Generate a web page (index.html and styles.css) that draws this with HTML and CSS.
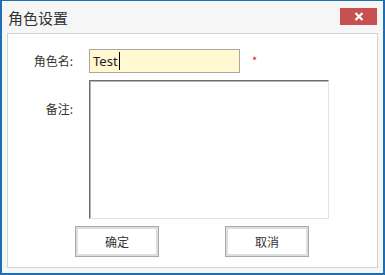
FILE: index.html
```html
<!DOCTYPE html>
<html lang="zh">
<head>
<meta charset="utf-8">
<title>角色设置</title>
<link rel="stylesheet" href="styles.css">
</head>
<body>
<div class="window">
  <div class="titlebar">
    <span class="title">角色设置</span>
    <button class="close" type="button" aria-label="关闭">
      <svg width="10" height="9" viewBox="0 0 10 9"><path d="M1.5 1 L8.5 8 M8.5 1 L1.5 8" stroke="#fff" stroke-width="2.2" fill="none"/></svg>
    </button>
  </div>
  <div class="panel">
    <div class="form">
      <label class="label">角色名:</label>
      <div class="field-row">
        <div class="input"><span class="value">Test</span><span class="caret"></span></div>
        <span class="required">*</span>
      </div>
      <label class="label label-top">备注:</label>
      <div class="textarea"></div>
    </div>
    <div class="actions">
      <button class="btn" type="button">确定</button>
      <button class="btn" type="button">取消</button>
    </div>
  </div>
</div>
</body>
</html>
```

FILE: styles.css
```css
* { box-sizing: border-box; }
html, body { margin: 0; padding: 0; }
body {
  font-family: "Noto Sans CJK SC", "Noto Sans", sans-serif;
  color: #333;
}
.window {
  width: 385px;
  height: 275px;
  background: #f6f6f6;
  border: 2px solid #1d6fb5;
  border-top-width: 1px;
  display: flex;
  flex-direction: column;
}
.titlebar {
  height: 32px;
  display: flex;
  align-items: flex-start;
  justify-content: space-between;
  padding: 0 6px 0 6px;
}
.title {
  font-size: 15px;
  line-height: 15px;
  margin-top: 9px;
  color: #333;
}
.close {
  width: 37px;
  height: 17px;
  margin-top: 7px;
  border: 0;
  padding: 0;
  background: #c75050;
  display: flex;
  align-items: center;
  justify-content: center;
}
.panel {
  margin: 0 5px 5px 5px;
  flex: 1;
  background: #fff;
  border: 1px solid #d2d2d2;
  padding: 15px 0 0 0;
}
.form {
  display: grid;
  grid-template-columns: 65px auto;
  column-gap: 16px;
  row-gap: 7px;
  align-items: center;
}
.label {
  font-size: 12px;
  line-height: 14px;
  text-align: right;
  color: #333;
}
.label-top {
  align-self: start;
  margin-top: 22px;
}
.field-row {
  display: flex;
  align-items: center;
}
.input {
  width: 151px;
  height: 24px;
  border: 1px solid #a8a89e;
  background: #fff8d1;
  display: flex;
  align-items: center;
  padding-left: 3px;
  font-family: "Noto Sans", "Open Sans", sans-serif;
  font-size: 13px;
  color: #222;
}
.caret {
  width: 1px;
  height: 18px;
  background: #000;
  margin-left: 1px;
}
.required {
  color: #d01010;
  font-size: 11px;
  line-height: 11px;
  margin-left: 12px;
  margin-top: -2px;
}
.textarea {
  width: 240px;
  height: 139px;
  border: 1px solid;
  border-color: #6e6e6e #e3e3e3 #e3e3e3 #6e6e6e;
  box-shadow: inset 1px 1px 0 #b4b4b4;
  background: #fff;
}
.actions {
  display: flex;
  gap: 66px;
  padding-left: 67px;
  margin-top: 7px;
}
.btn {
  width: 84px;
  height: 31px;
  border: 1px solid #a9a9a9;
  box-shadow: inset 0 0 0 2px #dedede;
  background: #fff;
  font-family: "Noto Sans CJK SC", sans-serif;
  font-size: 12px;
  color: #333;
  padding: 0;
}
```
